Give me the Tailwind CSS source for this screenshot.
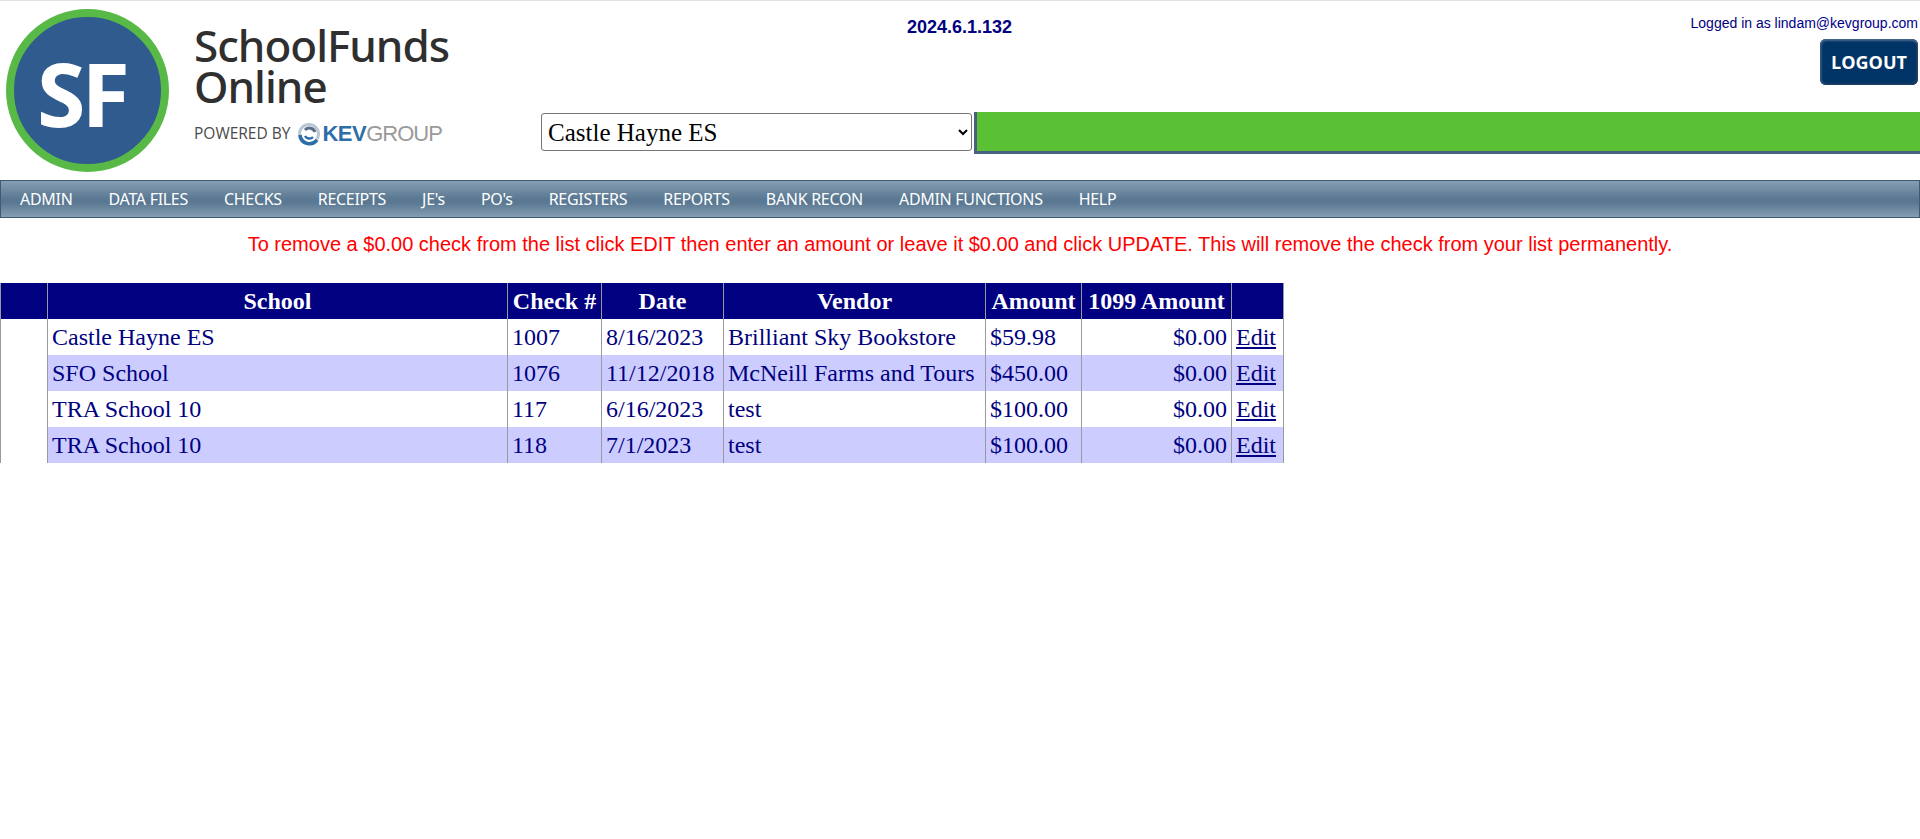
<!doctype html>
<html>
<head>
<meta charset="utf-8">
<script src="https://cdn.jsdelivr.net/npm/@tailwindcss/browser@4"></script>
<title>SchoolFunds Online</title>
</head>
<body class="bg-white font-['Liberation_Sans',sans-serif]">
<div class="border-t border-[#e3e3e3]">
  <header class="flex h-[179px]">
    <div class="w-[541px] shrink-0 flex pl-[6px] pt-[8px]">
      <div class="w-[163px] h-[163px] rounded-full border-[8px] border-[#59b947] bg-[#2f5b8e] flex items-center justify-center shrink-0">
        <span class="font-['Open_Sans',sans-serif] font-bold text-white text-[88px] leading-none tracking-[-4px] -ml-[12px] mt-[4px]">SF</span>
      </div>
      <div class="ml-[25px] pt-[16px] text-[#2f2f2f]">
        <div class="font-['Noto_Sans',sans-serif] font-medium text-[44px] leading-[41px] tracking-[-1px]">SchoolFunds<br>Online</div>
        <div class="flex items-center mt-[15px] h-[24px]">
          <span class="font-['Open_Sans',sans-serif] text-[15.5px] text-[#4a4a4a] whitespace-nowrap">POWERED BY</span>
          <svg class="ml-[6px] shrink-0" width="26" height="26" viewBox="0 0 26 26" fill="none">
            <circle cx="13" cy="13" r="9.5" stroke="#b9c6d4" stroke-width="3"/>
            <path d="M4 14a9.5 9.5 0 0 0 17 5" stroke="#2f6da8" stroke-width="3.5"/>
            <path d="M9 9a6 6 0 0 1 10 2" stroke="#5b6f85" stroke-width="3"/>
            <path d="M9 15a5 5 0 0 0 8 1" stroke="#2f6da8" stroke-width="2.5"/>
          </svg>
          <span class="font-['Liberation_Sans',sans-serif] font-bold text-[22px] text-[#2f6da8] leading-none tracking-[-0.5px]">KEV</span>
          <span class="font-['Liberation_Sans',sans-serif] text-[22px] text-[#9a9a9a] leading-none tracking-[-1px] font-light">GROUP</span>
        </div>
      </div>
    </div>
    <div class="flex-1 min-w-0 flex flex-col">
      <div class="flex h-[111px]">
        <div class="ml-[366px] mt-[16px] text-[18px] leading-[20px] font-bold text-[#000080]">2024.6.1.132</div>
        <div class="ml-auto pr-[2px] flex flex-col items-end pt-[14px]">
          <div class="text-[14px] leading-[16px] text-[#000080]">Logged in as <a class="text-[#00008b]">lindam@kevgroup.com</a></div>
          <button class="mt-[8px] w-[98px] h-[46px] rounded-[6px] bg-[#003366] text-white font-['Open_Sans',sans-serif] font-bold text-[18px] shadow-[inset_0_2px_2px_#46668c,inset_2px_0_2px_#2b5280,inset_-2px_-2px_2px_#1a3a60]">LOGOUT</button>
        </div>
      </div>
      <div class="flex items-start">
        <select class="mt-px w-[431px] h-[38px] border border-[#767676] rounded-[3px] bg-white text-black pl-[2px] font-['Liberation_Serif',serif] text-[25px] appearance-auto">
          <option>Castle Hayne ES</option>
        </select>
        <div class="ml-[2px] flex-1 h-[42px] bg-[#5ac134] border-l-[3px] border-b-[3px] border-[#4a6080]"></div>
      </div>
    </div>
  </header>
  <nav class="h-[38px] flex items-center gap-[36px] pl-[19px] border border-[#3f5a72] bg-[linear-gradient(#869db3,#5a7892_50%,#5a7892_60%,#869db3)] font-['Noto_Sans',sans-serif] text-[16px] text-white tracking-[-0.3px]">
    <a>ADMIN</a><a>DATA FILES</a><a>CHECKS</a><a>RECEIPTS</a><a>JE's</a><a>PO's</a><a>REGISTERS</a><a>REPORTS</a><a>BANK RECON</a><a>ADMIN FUNCTIONS</a><a>HELP</a>
  </nav>
  <p class="mt-[15px] text-center text-[20px] leading-[23px] text-[#ff0000]">To remove a $0.00 check from the list click EDIT then enter an amount or leave it $0.00 and click UPDATE. This will remove the check from your list permanently.</p>
  <table class="mt-[27px] w-[1283px] table-fixed border-collapse font-['Liberation_Serif',serif] text-[24px] leading-[27px] text-[#000080]">
    <colgroup>
      <col class="w-[47px]"><col class="w-[460px]"><col class="w-[94px]"><col class="w-[122px]"><col class="w-[262px]"><col class="w-[96px]"><col class="w-[150px]"><col class="w-[52px]">
    </colgroup>
    <thead class="bg-[#000080] text-white">
      <tr class="h-[36px]">
        <th class="border-x border-[#999]"></th><th class="border-x border-[#999] font-bold">School</th><th class="border-x border-[#999] font-bold">Check #</th><th class="border-x border-[#999] font-bold">Date</th><th class="border-x border-[#999] font-bold">Vendor</th><th class="border-x border-[#999] font-bold">Amount</th><th class="border-x border-[#999] font-bold">1099 Amount</th><th class="border-x border-[#999]"></th>
      </tr>
    </thead>
    <tbody>
      <tr class="h-[36px]">
        <td class="border-x border-[#999] bg-white"></td><td class="border-x border-[#999] px-[4px]">Castle Hayne ES</td><td class="border-x border-[#999] px-[4px]">1007</td><td class="border-x border-[#999] px-[4px]">8/16/2023</td><td class="border-x border-[#999] px-[4px] whitespace-nowrap">Brilliant Sky Bookstore</td><td class="border-x border-[#999] px-[4px]">$59.98</td><td class="border-x border-[#999] px-[4px] text-right">$0.00</td><td class="border-x border-[#999] px-[4px]"><a class="underline">Edit</a></td>
      </tr>
      <tr class="h-[36px] bg-[#ccccff]">
        <td class="border-x border-[#999] bg-white"></td><td class="border-x border-[#999] px-[4px]">SFO School</td><td class="border-x border-[#999] px-[4px]">1076</td><td class="border-x border-[#999] px-[4px]">11/12/2018</td><td class="border-x border-[#999] px-[4px] whitespace-nowrap">McNeill Farms and Tours</td><td class="border-x border-[#999] px-[4px]">$450.00</td><td class="border-x border-[#999] px-[4px] text-right">$0.00</td><td class="border-x border-[#999] px-[4px]"><a class="underline">Edit</a></td>
      </tr>
      <tr class="h-[36px]">
        <td class="border-x border-[#999] bg-white"></td><td class="border-x border-[#999] px-[4px]">TRA School 10</td><td class="border-x border-[#999] px-[4px]">117</td><td class="border-x border-[#999] px-[4px]">6/16/2023</td><td class="border-x border-[#999] px-[4px]">test</td><td class="border-x border-[#999] px-[4px]">$100.00</td><td class="border-x border-[#999] px-[4px] text-right">$0.00</td><td class="border-x border-[#999] px-[4px]"><a class="underline">Edit</a></td>
      </tr>
      <tr class="h-[36px] bg-[#ccccff]">
        <td class="border-x border-[#999] bg-white"></td><td class="border-x border-[#999] px-[4px]">TRA School 10</td><td class="border-x border-[#999] px-[4px]">118</td><td class="border-x border-[#999] px-[4px]">7/1/2023</td><td class="border-x border-[#999] px-[4px]">test</td><td class="border-x border-[#999] px-[4px]">$100.00</td><td class="border-x border-[#999] px-[4px] text-right">$0.00</td><td class="border-x border-[#999] px-[4px]"><a class="underline">Edit</a></td>
      </tr>
    </tbody>
  </table>
</div>
</body>
</html>
